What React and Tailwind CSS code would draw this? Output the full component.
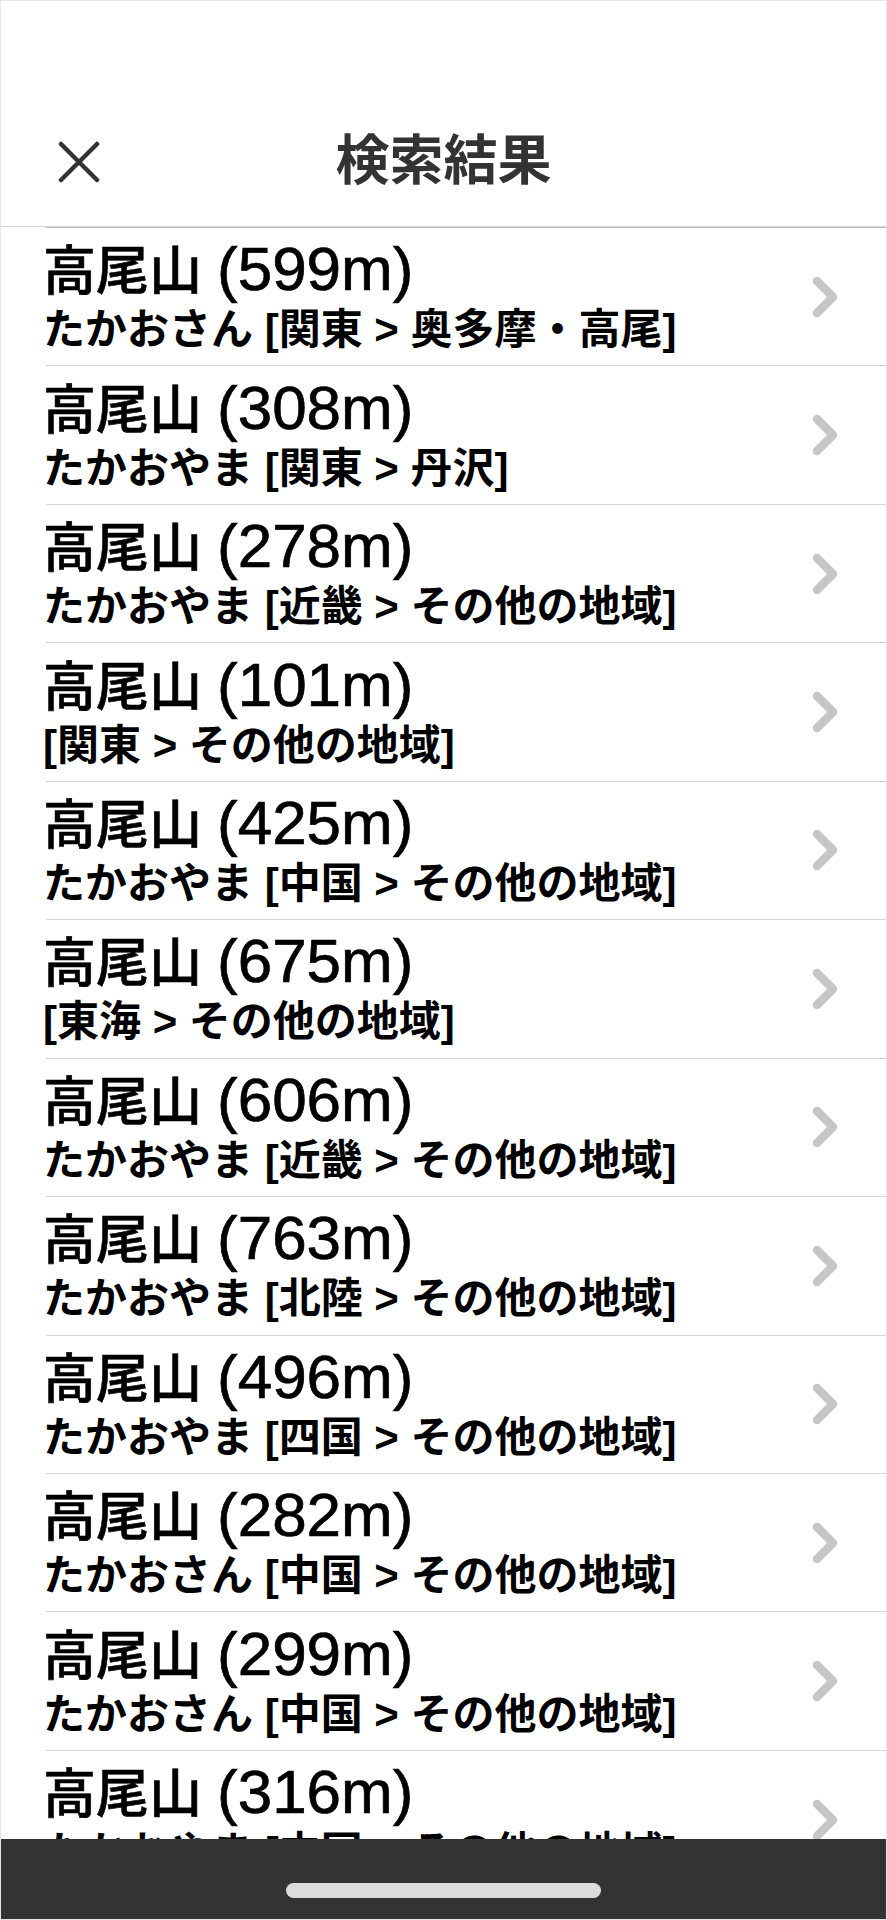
import React from 'react';

const results = [
  { elev: '599', sub: 'たかおさん [関東 > 奥多摩・高尾]' },
  { elev: '308', sub: 'たかおやま [関東 > 丹沢]' },
  { elev: '278', sub: 'たかおやま [近畿 > その他の地域]' },
  { elev: '101', sub: '[関東 > その他の地域]' },
  { elev: '425', sub: 'たかおやま [中国 > その他の地域]' },
  { elev: '675', sub: '[東海 > その他の地域]' },
  { elev: '606', sub: 'たかおやま [近畿 > その他の地域]' },
  { elev: '763', sub: 'たかおやま [北陸 > その他の地域]' },
  { elev: '496', sub: 'たかおやま [四国 > その他の地域]' },
  { elev: '282', sub: 'たかおさん [中国 > その他の地域]' },
  { elev: '299', sub: 'たかおさん [中国 > その他の地域]' },
  { elev: '316', sub: 'たかおやま [中国 > その他の地域]' },
];

function Chevron() {
  return (
    <svg width="30" height="46" viewBox="0 0 30 46" fill="none">
      <path
        d="M7 7 L23 23 L7 39"
        stroke="#c6c6c8"
        strokeWidth="8.5"
        strokeLinecap="round"
        strokeLinejoin="round"
      />
    </svg>
  );
}

function ResultRow({ elev, sub }) {
  return (
    <div className="h-[138.45px] shrink-0 flex items-center border-b border-[#d4d4d4] pr-[46px]">
      <div className="flex-1 flex flex-col -ml-[3px]">
        <div className="h-[62px] flex items-baseline text-black whitespace-nowrap">
          <span className="text-[53px] leading-[62px] font-medium [-webkit-text-stroke:0.6px_black]">高尾山</span>
          <span className="text-[62px] leading-[62px] ml-[15px] [-webkit-text-stroke:0.7px_black]">
            ({elev}m)
          </span>
        </div>
        <div className="mt-[5px] text-[42px] leading-[50px] text-black font-bold whitespace-nowrap">
          {sub}
        </div>
      </div>
      <Chevron />
    </div>
  );
}

export default function App() {
  return (
    <div
      className="h-[1920px] w-full flex flex-col overflow-hidden bg-white border border-[#e6e6e6]"
      style={{ fontFamily: '"Liberation Sans", "Noto Sans CJK JP", sans-serif' }}
    >
      <div className="h-[226px] shrink-0 flex items-end border-b border-[#d8d8d8]">
        <div className="w-full h-[128px] grid grid-cols-[120px_1fr_120px] items-center">
          <button className="ml-[56px] w-[44px] h-[44px] flex items-center justify-center">
            <svg width="42" height="42" viewBox="0 0 42 42" fill="none">
              <path d="M3 3 L39 39 M39 3 L3 39" stroke="#333333" strokeWidth="4.5" strokeLinecap="round" />
            </svg>
          </button>
          <div className="text-center text-[54px] font-bold text-[#333333] pb-[2px]">
            検索結果
          </div>
          <div />
        </div>
      </div>
      <div className="flex-1 overflow-hidden pl-[45px] min-h-0">
        <div className="border-t border-[#b8b8b8]" />
        <div className="flex flex-col">
          {results.map((r, i) => (
            <ResultRow key={i} elev={r.elev} sub={r.sub} />
          ))}
        </div>
      </div>
      <div className="h-[80px] shrink-0 bg-[#333333] flex justify-center pt-[44px]">
        <div className="w-[315px] h-[15px] rounded-full bg-[#dcdcdc]" />
      </div>
    </div>
  );
}
